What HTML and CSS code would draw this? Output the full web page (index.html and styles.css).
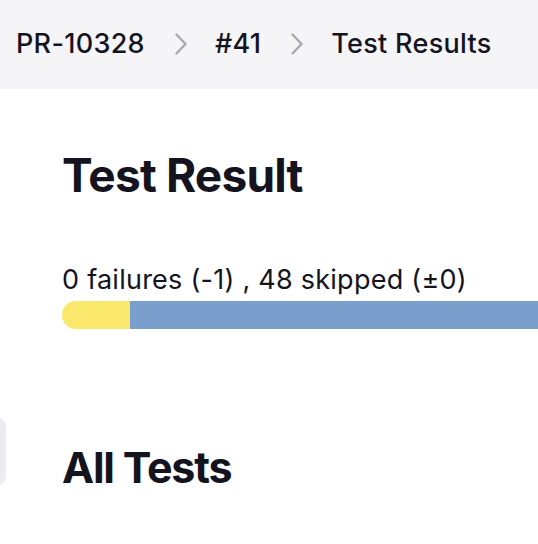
FILE: index.html
```html
<!DOCTYPE html>
<html lang="en">
<head>
<meta charset="utf-8">
<title>Test Results</title>
<link rel="stylesheet" href="styles.css">
</head>
<body>
<header class="topbar">
  <nav class="crumbs">
    <span class="crumb">PR-10328</span>
    <svg class="chev" viewBox="0 0 12 22" width="12" height="22"><path d="M1.5 1.5 L10.5 11 L1.5 20.5" fill="none" stroke="currentColor" stroke-width="2.4" stroke-linecap="round" stroke-linejoin="round"/></svg>
    <span class="crumb">#41</span>
    <svg class="chev" viewBox="0 0 12 22" width="12" height="22"><path d="M1.5 1.5 L10.5 11 L1.5 20.5" fill="none" stroke="currentColor" stroke-width="2.4" stroke-linecap="round" stroke-linejoin="round"/></svg>
    <span class="crumb">Test Results</span>
  </nav>
</header>
<div class="side-tab"></div>
<main class="content">
  <h1 class="title">Test Result</h1>
  <div class="summary">0 failures (-1) , 48 skipped (±0)</div>
  <div class="bar-wrap">
    <div class="bar">
      <div class="seg seg-skip" style="width:68px"></div>
      <div class="seg seg-pass"></div>
    </div>
  </div>
  <h2 class="title sub">All Tests</h2>
</main>
</body>
</html>
```
FILE: styles.css
```css
html, body {
  margin: 0;
  padding: 0;
  overflow: hidden;
  background: #ffffff;
}
body {
  font-family: Inter, "Noto Sans", sans-serif;
  color: #14141f;
  position: relative;
  width: 538px;
  height: 544px;
}
.topbar {
  height: 87px;
  padding-bottom: 2px;
  background: #f5f5f7;
  display: flex;
  align-items: center;
  padding-left: 16px;
}
.crumbs {
  display: flex;
  align-items: center;
  font-size: 27px;
  font-weight: 500;
  letter-spacing: 0.3px;
}
.chev {
  color: #a8a8b2;
  margin: 0 28px 0 30px;
}
.side-tab {
  position: absolute;
  left: -10px;
  top: 418px;
  width: 16px;
  height: 67px;
  background: #ececf1;
  border-radius: 10px;
}
.content {
  padding-left: 62px;
}
.title {
  margin: 0;
  font-size: 46px;
  font-weight: 700;
  letter-spacing: -0.8px;
  line-height: 1.1;
  padding-top: 61px;
}
.summary {
  margin-top: 64px;
  font-size: 27px;
  line-height: 30px;
  letter-spacing: 0.25px;
}
.bar-wrap {
  margin-top: 6px;
  overflow: hidden;
}
.bar {
  display: flex;
  height: 28px;
  margin-right: -20px;
  border-radius: 14px;
  overflow: hidden;
}
.seg-skip { background: #f9e86b; }
.seg-pass { background: #7b9fcc; flex: 1; }
.sub {
  font-size: 43px;
  letter-spacing: -1.2px;
  padding-top: 115px;
}
```
